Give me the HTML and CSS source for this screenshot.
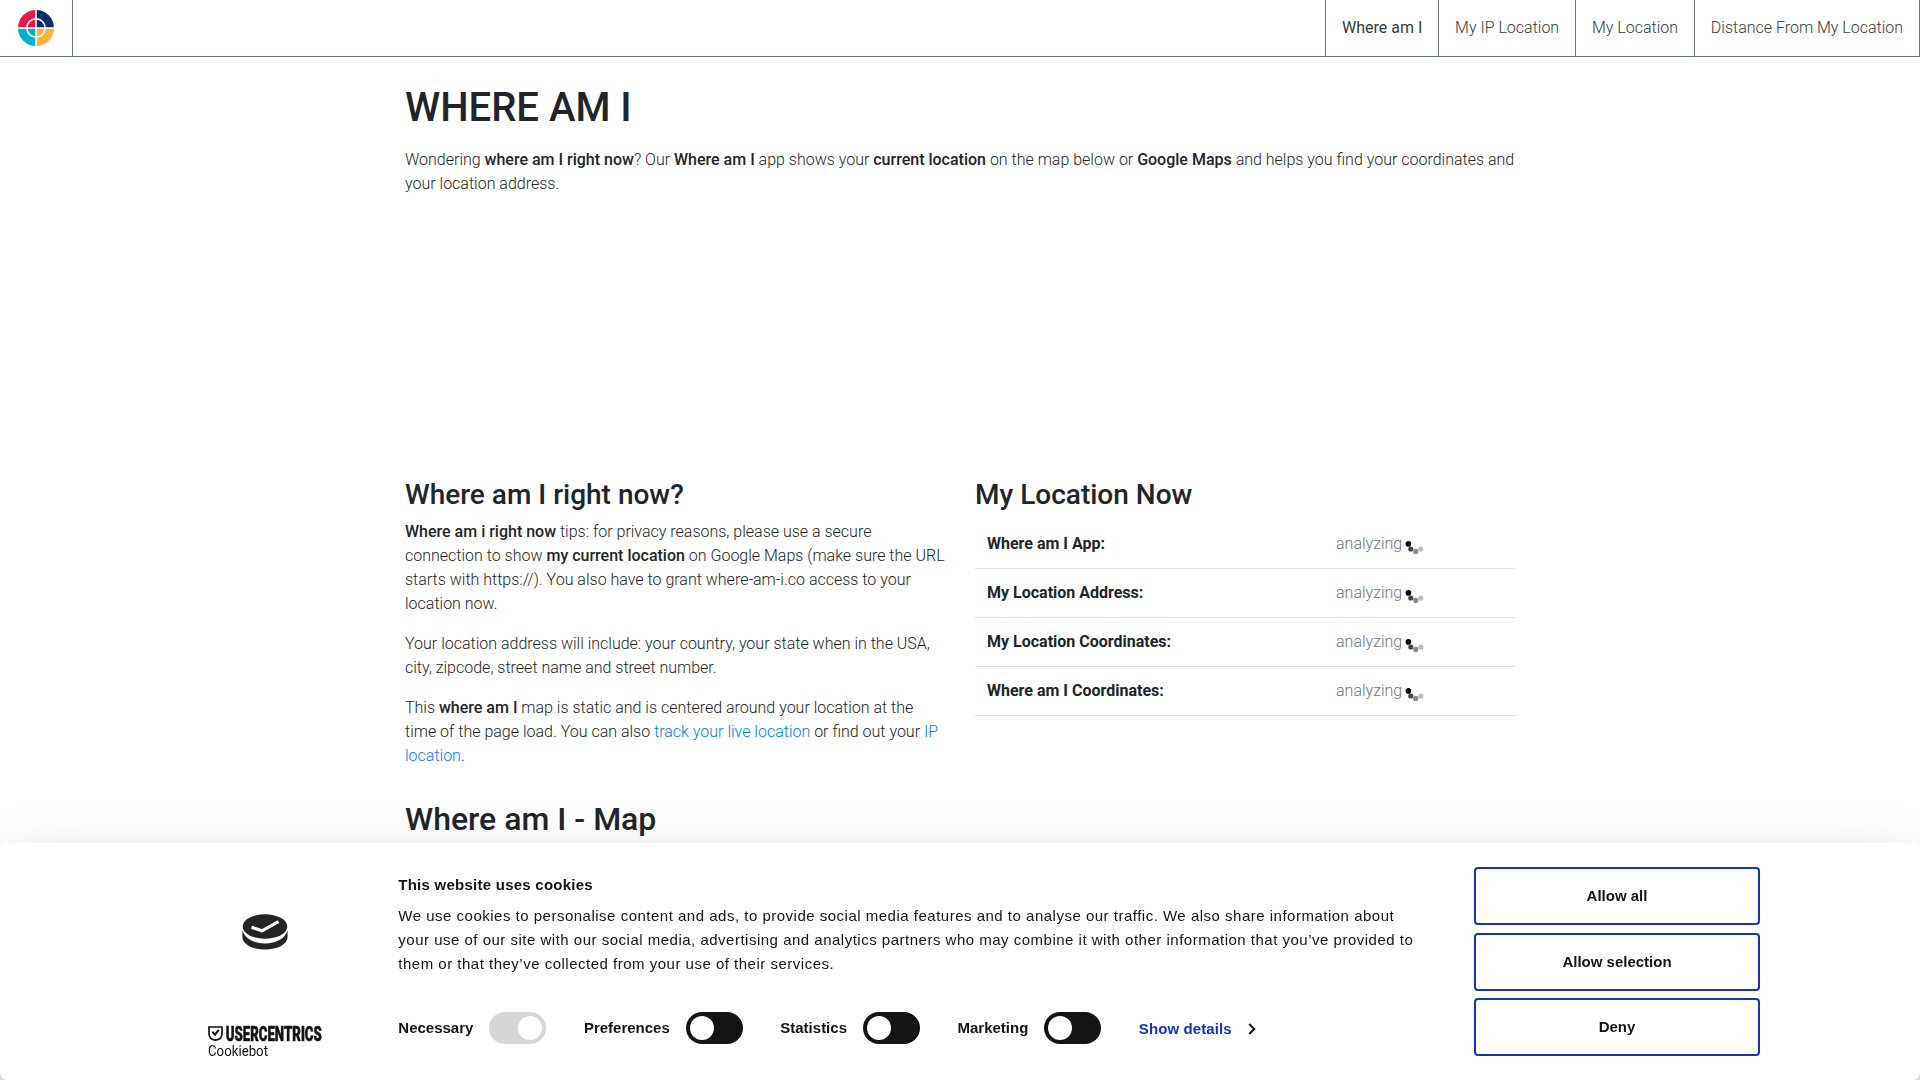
FILE: index.html
```html
<!DOCTYPE html>
<html lang="en">
<head>
<meta charset="utf-8">
<title>Where am I</title>
<link rel="stylesheet" href="styles.css">
</head>
<body>
<header class="navbar">
  <a class="brand">
    <svg width="36" height="36" viewBox="0 0 36 36">
      <path d="M18 18V0A18 18 0 0 0 0 18z" fill="#e31b46"/>
      <path d="M18 18V0A18 18 0 0 1 36 18z" fill="#03306a"/>
      <path d="M18 18H0A18 18 0 0 0 18 36z" fill="#00b2c8"/>
      <path d="M18 18H36A18 18 0 0 1 18 36z" fill="#ffb238"/>
      <path d="M18 0V36M0 18H36" stroke="#fff" stroke-width="1.6"/>
      <circle cx="18" cy="18" r="9.2" fill="none" stroke="#fff" stroke-width="1.7"/>
    </svg>
  </a>
  <nav class="menu">
    <a class="menu-item active">Where am I</a>
    <a class="menu-item">My IP Location</a>
    <a class="menu-item">My Location</a>
    <a class="menu-item">Distance From My Location</a>
  </nav>
</header>

<main class="container">
  <h1>WHERE AM I</h1>
  <p class="lead">Wondering <b>where am I right now</b>? Our <b>Where am I</b> app shows your <b>current location</b> on the map below or <b>Google Maps</b> and helps you find your coordinates and your location address.</p>
  <div class="columns">
    <section>
      <h2>Where am I right now?</h2>
      <p><b>Where am i right now</b> tips: for privacy reasons, please use a secure connection to show <b>my current location</b> on Google Maps (make sure the URL starts with https://). You also have to grant where-am-i.co access to your location now.</p>
      <p>Your location address will include: your country, your state when in the USA, city, zipcode, street name and street number.</p>
      <p>This <b>where am I</b> map is static and is centered around your location at the time of the page load. You can also <a class="link">track your live location</a> or find out your <a class="link">IP location</a>.</p>
    </section>
    <section>
      <h2>My Location Now</h2>
      <div class="row"><strong>Where am I App:</strong><span class="status">analyzing <svg class="spin" width="20" height="16"><use href="#dots"/></svg></span></div>
      <div class="row"><strong>My Location Address:</strong><span class="status">analyzing <svg class="spin" width="20" height="16"><use href="#dots"/></svg></span></div>
      <div class="row"><strong>My Location Coordinates:</strong><span class="status">analyzing <svg class="spin" width="20" height="16"><use href="#dots"/></svg></span></div>
      <div class="row"><strong>Where am I Coordinates:</strong><span class="status">analyzing <svg class="spin" width="20" height="16"><use href="#dots"/></svg></span></div>
    </section>
  </div>
  <h2 class="map-title">Where am I - Map</h2>
</main>

<svg class="defs" width="0" height="0">
  <g id="dots">
    <circle cx="3.4" cy="2.9" r="2.8" fill="#000"/>
    <circle cx="5.8" cy="8" r="2.6" fill="#444"/>
    <circle cx="10.8" cy="10.4" r="2.6" fill="#888"/>
    <circle cx="15.800" cy="8" r="2.6" fill="#bbb"/>
  </g>
</svg>

<div class="cookie">
  <div class="logos">
    <svg class="cookie-icon" width="46" height="36" viewBox="0 0 46 36">
      <path d="M.4 16.5V23C.4 30 10 35.5 23 35.5S45.600 30 45.600 23V16.500C43 24.500 34 29.500 23 29.500S3 24.500.4 16.500z" fill="#242424"/>
      <ellipse cx="23" cy="12.500" rx="22.300" ry="12.300" fill="#242424"/>
      <path d="M9.500 13.300L20 16.800L36.500 7.600" fill="none" stroke="#fff" stroke-width="3.200"/>
    </svg>
    <svg class="vendor" width="116" height="36" viewBox="0 0 116 36">
      <path d="M1 2H14V8.500C14 12.500 11 14.800 7.500 15.200C4 14.800 1 12.500 1 8.500z" fill="none" stroke="#141414" stroke-width="1.700"/>
      <path d="M4.300 6.800L7 9.700L10.800 4.800" fill="none" stroke="#141414" stroke-width="2"/>
      <text class="vendor-name" x="17.800" y="16" textLength="96" lengthAdjust="spacingAndGlyphs">USERCENTRICS</text>
      <text class="vendor-product" x="0" y="30.500" textLength="60" lengthAdjust="spacingAndGlyphs">Cookiebot</text>
    </svg>
  </div>
  <div class="consent">
    <h3>This website uses cookies</h3>
    <p>We use cookies to personalise content and ads, to provide social media features and to analyse our traffic. We also share information about your use of our site with our social media, advertising and analytics partners who may combine it with other information that you’ve provided to them or that they’ve collected from your use of their services.</p>
    <div class="toggles">
      <label>Necessary<i class="switch locked"></i></label>
      <label>Preferences<i class="switch"></i></label>
      <label>Statistics<i class="switch"></i></label>
      <label>Marketing<i class="switch"></i></label>
      <a class="details">Show details
        <svg width="8" height="12" viewBox="0 0 8 12"><path d="M1.200 1L6.300 6L1.200 11" fill="none" stroke="#141414" stroke-width="2"/></svg>
      </a>
    </div>
  </div>
  <div class="actions">
    <button>Allow all</button>
    <button>Allow selection</button>
    <button>Deny</button>
  </div>
</div>
</body>
</html>
```
FILE: styles.css
```css
* { box-sizing: border-box; }
body {
  margin: 0;
  height: 1080px;
  overflow: hidden;
  font: 300 16px/24px Roboto, sans-serif;
  color: #212529;
  background: #fff;
}
h1, h2, h3, p { margin: 0; }
h1, h2 { font-weight: 500; line-height: 1.2; }
b { font-weight: 500; }
strong { font-weight: 700; }

.navbar {
  display: flex;
  justify-content: space-between;
  height: 57px;
  border-bottom: 1px solid #6c757d;
}
.brand {
  display: flex;
  align-items: center;
  width: 73px;
  padding-left: 17.700px;
  border-right: 1px solid #6c757d;
}
.menu { display: flex; border-right: 1px solid #6c757d; }
.menu-item {
  padding: 16px 15.900px 0;
  border-left: 1px solid #6c757d;
  color: #343a40;
}
.menu-item.active { font-weight: 400; }

.container { width: 1110px; margin: 0 auto; padding-top: 27px; }
h1 { font-size: 40px; }
.lead { height: 312px; margin-top: 16px; margin-bottom: 18px; }
.columns {
  display: grid;
  grid-template-columns: 540px 540px;
  gap: 30px;
}
.columns h2 { font-size: 28px; margin-bottom: 8px; }
.columns p { margin-bottom: 16px; }
.link { color: #007bff; }
.row {
  display: grid;
  grid-template-columns: 349px 1fr;
  height: 49px;
  border-bottom: 1px solid #dee2e6;
}
.row > * { padding: 12px; }
.status { color: #6c757d; }
.spin { vertical-align: -8px; margin-left: -1px; }
.map-title { font-size: 32px; margin-top: 16px; }
.defs { position: absolute; }

.cookie {
  position: fixed;
  left: 0;
  right: 0;
  bottom: 0;
  height: 237px;
  display: flex;
  border-radius: 8px;
  background: #fff;
  box-shadow: 0 32px 68px rgba(0, 0, 0, .3);
  color: #141414;
  font: 400 15px/24px "Liberation Sans", Arial, sans-serif;
}
.logos {
  display: flex;
  flex-direction: column;
  justify-content: space-between;
  align-items: center;
  width: 238px;
  margin-left: 160px;
  padding: 70.500px 28px 19px 0;
}
.vendor { overflow: visible; margin-left: 2px; }
.vendor-name { font: 900 21px Roboto, sans-serif; fill: #141414; stroke: #141414; stroke-width: .6px; }
.vendor-product { font: 400 15.500px Roboto, sans-serif; fill: #141414; }
.consent { width: 1076px; padding: 30px 0 0 .300px; }
.consent h3 { font-size: 15px; font-weight: 700; letter-spacing: .25px; }
.consent p { width: 1030px; margin-top: 7px; letter-spacing: .5px; }
.toggles { display: flex; margin-top: 36px; font-weight: 700; }
.toggles label { display: flex; align-items: center; margin-right: 37.500px; }
.switch {
  width: 57px;
  height: 32px;
  margin-left: 16px;
  padding: 4px;
  border-radius: 16px;
  background: #141414;
}
.switch::before {
  content: "";
  display: block;
  width: 24px;
  height: 24px;
  border-radius: 50%;
  background: #fff;
}
.switch.locked { background: #d6d6d6; }
.switch.locked::before { margin-left: 25px; }
.details {
  display: flex;
  align-items: center;
  gap: 16px;
  padding-top: 2px;
  letter-spacing: .1px;
  color: #1032cf;
}
.actions { padding-top: 24px; }
.actions button {
  display: block;
  width: 286px;
  height: 58px;
  margin-bottom: 7.500px;
  padding: 0 0 1px;
  border: 2px solid #1032cf;
  border-radius: 4px;
  background: #fff;
  color: #141414;
  font: 700 15px "Liberation Sans", Arial, sans-serif;
}
```
